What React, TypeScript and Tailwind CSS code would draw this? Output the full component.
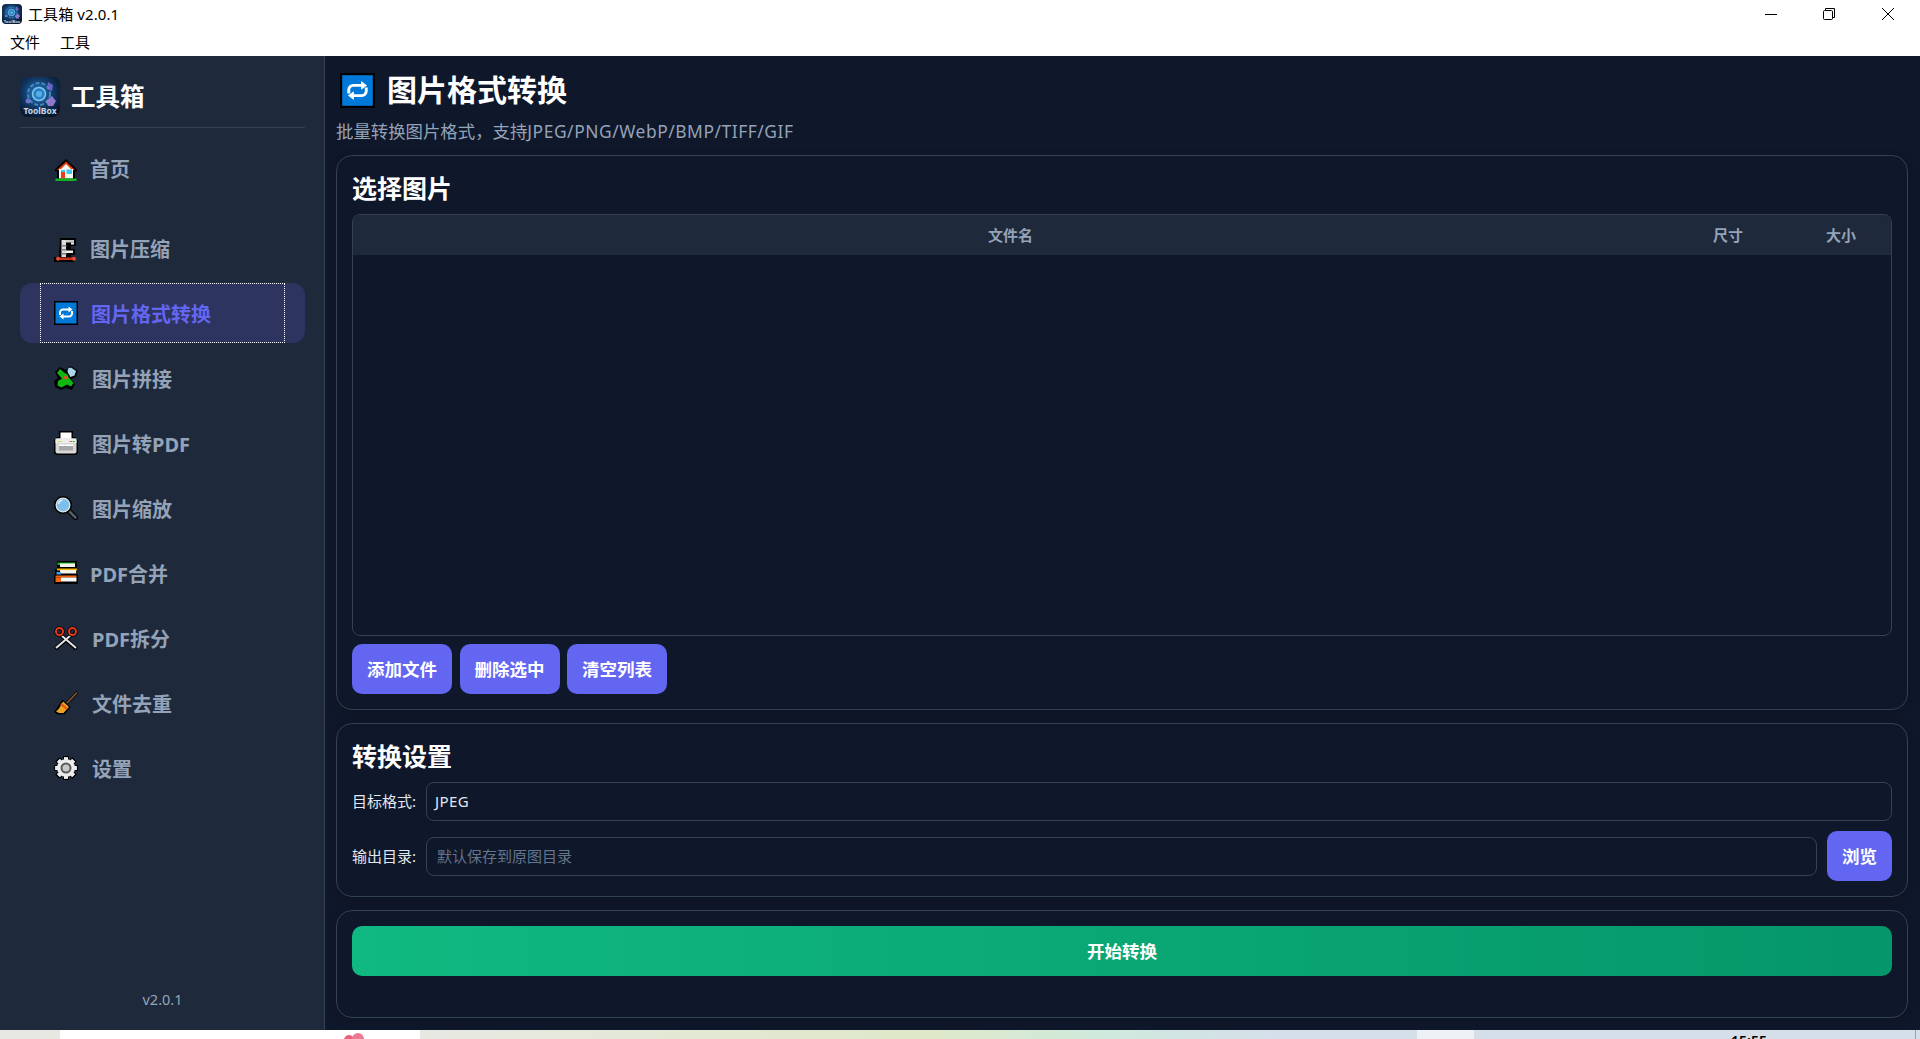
import React from "react";

const FONT = '"Noto Sans", "Noto Sans CJK SC", sans-serif';

function Logo({ id, className }: { id: string; className: string }) {
  return (
    <svg viewBox="0 0 40 40" className={className}>
      <defs>
        <radialGradient id={id} cx="0.45" cy="0.4" r="0.65">
          <stop offset="0" stopColor="#2b7fd0" />
          <stop offset="0.55" stopColor="#123a66" />
          <stop offset="1" stopColor="#08162a" />
        </radialGradient>
      </defs>
      <rect width="40" height="40" rx="8" fill={`url(#${id})`} />
      <circle cx="19" cy="17" r="11" fill="none" stroke="#4fa0d4" strokeWidth="2" strokeDasharray="4 2" opacity="0.75" />
      <circle cx="19" cy="17" r="6.5" fill="#2a7fc8" stroke="#7cc8ea" strokeWidth="1.5" />
      <circle cx="19" cy="17" r="3" fill="#58aee0" />
      <path d="M28 5l5 3-1 6-5-2z" fill="#7d6fd8" opacity="0.8" />
      <path d="M32 19l4 5-3 5h-5l-2-5z" fill="#a784e0" opacity="0.85" />
      <circle cx="8" cy="24" r="2.5" fill="#8a7be0" opacity="0.8" />
      <text x="20" y="37" textAnchor="middle" fontSize="8.5" fontWeight="700" fill="#c8d8e8" fontFamily="Noto Sans, sans-serif">ToolBox</text>
    </svg>
  );
}

function HouseIcon() {
  return (
    <svg viewBox="0 0 24 24" className="h-[24px] w-[24px]">
      <path d="M12 1L1 11.500v2h2V23h18v-9.500h2v-2z" fill="#000" />
      <path d="M12 3.500L3 12h18z" fill="#e8380f" />
      <rect x="5" y="11" width="14" height="9.500" fill="#f6f6f0" />
      <path d="M12 6L6 12h12z" fill="#f6f6f0" />
      <rect x="7" y="14" width="4" height="6.500" fill="#ee3b1a" />
      <rect x="7" y="12" width="4" height="2" fill="#3ec6f4" />
      <rect x="12.500" y="11.500" width="5.500" height="4.500" fill="#3ec6f4" />
      <rect x="1.500" y="20.500" width="21" height="2.500" fill="#13b31d" />
    </svg>
  );
}

function ClampIcon() {
  return (
    <svg viewBox="0 0 24 24" className="h-[24px] w-[24px]">
      <path d="M6 0h16v8h-5v3h4v6h-4v3h3v4H0v-5h5z" fill="#000" />
      <rect x="7.500" y="2" width="4.500" height="17" fill="#dcdcdc" />
      <rect x="12" y="2" width="8" height="2.500" fill="#c9c9c9" />
      <rect x="17" y="4.500" width="3" height="2" fill="#f2f2f2" />
      <rect x="7" y="7" width="5.500" height="1.500" fill="#7d7d7d" />
      <rect x="7" y="11" width="5.500" height="1.500" fill="#7d7d7d" />
      <rect x="7" y="15" width="5.500" height="1.500" fill="#7d7d7d" />
      <rect x="12" y="12.500" width="7" height="2.500" fill="#efefef" />
      <rect x="3" y="19.500" width="18" height="2.500" fill="#c9341b" />
      <circle cx="4" cy="20.700" r="2" fill="#e64a2a" />
      <circle cx="20" cy="20.700" r="2" fill="#e64a2a" />
    </svg>
  );
}

function RepeatIcon({ className }: { className: string }) {
  return (
    <svg viewBox="0 0 24 24" className={className}>
      <rect width="24" height="24" fill="#000" />
      <rect x="1.500" y="1.500" width="21" height="21" fill="#0078d7" />
      <path d="M6 14v-2.500a3 3 0 0 1 3-3h7" fill="none" stroke="#fff" strokeWidth="2" />
      <path d="M14.500 5.500L18.500 8.500l-4 3z" fill="#fff" />
      <path d="M18 10v2.500a3 3 0 0 1-3 3H8" fill="none" stroke="#fff" strokeWidth="2" />
      <path d="M9.500 12.500L5.500 15.500l4 3z" fill="#fff" />
    </svg>
  );
}

function PuzzleIcon() {
  return (
    <svg viewBox="0 0 24 24" className="h-[24px] w-[24px]">
      <path d="M6 1l6 3 5-4 7 5-2 6-5 2 4 5-3 6-6-2-5 2-6-3-1-6 4-3-3-6z" fill="#000" />
      <path d="M14 2.500l3-1 5 3.500-1.500 4.500-4 1.500-3-5z" fill="#a9d6ea" />
      <path d="M6 3l4 3.500 3.500 2 1 2.500 5 6-2.500 3.500-4-2-5.500 3-4-2 .5-4.500 4-2.500L3 7z" fill="#12b512" />
      <rect x="10" y="10" width="3.500" height="3" fill="#d8532a" />
    </svg>
  );
}

function PrinterIcon() {
  return (
    <svg viewBox="0 0 24 24" className="h-[24px] w-[24px]">
      <path d="M5 0h14v6h2l3 3v13l-2 2H2l-2-2V9l3-3h2z" fill="#000" />
      <rect x="6.500" y="1.500" width="11" height="8" fill="#fff" />
      <rect x="1.500" y="7.500" width="21" height="15" rx="2" fill="#d7d7d7" />
      <rect x="1.500" y="7.500" width="21" height="4.500" fill="#ececec" />
      <rect x="3.500" y="10" width="4.500" height="1" fill="#d9d94a" />
      <rect x="15.500" y="10" width="2.500" height="1" fill="#e05a4a" />
      <rect x="18.500" y="10" width="2.500" height="1" fill="#49b95a" />
      <rect x="5" y="15" width="14" height="4.500" fill="#a6a6a6" />
      <rect x="5" y="13.500" width="14" height="1.500" fill="#fff" />
    </svg>
  );
}

function SearchIcon() {
  return (
    <svg viewBox="0 0 24 24" className="h-[24px] w-[24px]">
      <path d="M14 14l7.500 7.500" stroke="#000" strokeWidth="5" strokeLinecap="round" />
      <path d="M15 15l6.500 6.500" stroke="#56606a" strokeWidth="2.500" strokeLinecap="round" />
      <circle cx="9" cy="9" r="9" fill="#000" />
      <circle cx="9" cy="9" r="7.500" fill="#dfe6ea" />
      <circle cx="9" cy="9" r="6.200" fill="#7cc0ec" />
      <path d="M4.500 8a5 5 0 0 1 4-4" fill="none" stroke="#d6efff" strokeWidth="1.500" />
    </svg>
  );
}

function BooksIcon() {
  return (
    <svg viewBox="0 0 24 24" className="h-[24px] w-[24px]">
      <path d="M3 0h20v8h-1v5h2v10H0v-9h1V8h2z" fill="#000" />
      <rect x="3.500" y="1.500" width="17.500" height="2.500" fill="#12b01f" />
      <rect x="6" y="2.500" width="15" height="3.500" fill="#f4f4ec" />
      <rect x="3" y="7.500" width="20" height="2" fill="#f5b400" />
      <rect x="6" y="9" width="16" height="3.500" fill="#f4f4ec" />
      <rect x="2.500" y="11" width="4.500" height="2.500" fill="#3ea0e8" />
      <rect x="1.500" y="14.500" width="21" height="2" fill="#f2640f" />
      <rect x="1.500" y="16.500" width="5.500" height="4.500" fill="#f2640f" />
      <rect x="7" y="16.500" width="15.500" height="4" fill="#fafafa" />
    </svg>
  );
}

function ScissorsIcon() {
  return (
    <svg viewBox="0 0 24 24" className="h-[24px] w-[24px]">
      <path d="M7 9l15.500 14M17 9L1.500 23" stroke="#000" strokeWidth="4" />
      <path d="M7.500 9.500l14.500 12.500M16.500 9.500L2 22" stroke="#e4e4e4" strokeWidth="2" />
      <circle cx="5.500" cy="5.500" r="3.500" fill="none" stroke="#000" strokeWidth="3.500" />
      <circle cx="18.500" cy="5.500" r="3.500" fill="none" stroke="#000" strokeWidth="3.500" />
      <circle cx="5.500" cy="5.500" r="3.500" fill="none" stroke="#e5391a" strokeWidth="2" />
      <circle cx="18.500" cy="5.500" r="3.500" fill="none" stroke="#e5391a" strokeWidth="2" />
    </svg>
  );
}

function BroomIcon() {
  return (
    <svg viewBox="0 0 24 24" className="h-[24px] w-[24px]">
      <path d="M23.500 1L13 12" stroke="#000" strokeWidth="3" />
      <path d="M23 1.500L13 12" stroke="#8a5a33" strokeWidth="1.700" />
      <path d="M8.500 8.500l8 7.500-6 7.500H4L0 21l3-4z" fill="#000" />
      <path d="M9 10.500l6 5.500-5.500 6H5l-3-1.500 3-3z" fill="#eda21c" />
      <path d="M7.500 12l6 5-1.300 1.700-6-5z" fill="#e2531b" />
    </svg>
  );
}

function GearIcon() {
  const teeth = [0, 45, 90, 135, 180, 225, 270, 315];
  return (
    <svg viewBox="0 0 24 24" className="h-[24px] w-[24px]">
      {teeth.map((a) => (
        <rect key={a} x="9" y="0" width="6" height="24" fill="#000" transform={`rotate(${a} 12 12)`} />
      ))}
      {teeth.map((a) => (
        <rect key={a} x="10" y="1.300" width="4" height="21.400" fill="#ececec" transform={`rotate(${a} 12 12)`} />
      ))}
      <circle cx="12" cy="12" r="9" fill="#ececec" />
      <circle cx="12" cy="12" r="5.500" fill="#5a5a5a" />
      <circle cx="12" cy="12" r="3.500" fill="#c8c8c8" />
    </svg>
  );
}

const items = [
  { icon: <PuzzleIcon />, label: "图片拼接", shift: true },
  { icon: <PrinterIcon />, label: "图片转PDF", shift: true },
  { icon: <SearchIcon />, label: "图片缩放", shift: true },
  { icon: <BooksIcon />, label: "PDF合并", shift: false },
  { icon: <ScissorsIcon />, label: "PDF拆分", shift: true },
  { icon: <BroomIcon />, label: "文件去重", shift: true },
  { icon: <GearIcon />, label: "设置", shift: true },
];

function NavItem({ icon, label, shift }: { icon: React.ReactNode; label: string; shift: boolean }) {
  return (
    <div className="flex h-[60px] items-center pl-[34px]">
      <span className="flex w-[24px] shrink-0 items-center">{icon}</span>
      <span className={`pt-[4px] text-[20px] font-bold text-[#94a3b8] ${shift ? "ml-[14px]" : "ml-[12px]"}`}>{label}</span>
    </div>
  );
}

function Button({ label, className }: { label: string; className: string }) {
  return (
    <div className={`flex h-[50px] items-center justify-center rounded-[10px] bg-[#6366f1] text-[17.5px] font-bold text-white ${className}`}>
      {label}
    </div>
  );
}

function Card({ children, className }: { children: React.ReactNode; className: string }) {
  return (
    <section className={`flex flex-col rounded-[16px] border-[1.5px] border-[#334155] bg-[#0f172a] px-[15px] shadow-[0_2px_10px_rgba(0,0,0,0.18)] ${className}`}>
      {children}
    </section>
  );
}

export default function App() {
  return (
    <div className="flex h-[1039px] w-[1920px] flex-col overflow-hidden bg-white" style={{ fontFamily: FONT }}>
      <header className="h-[56px] shrink-0 bg-white text-black">
        <div className="flex h-[28px] items-center">
          <Logo id="logo-small" className="ml-[2px] h-[20px] w-[20px]" />
          <span className="ml-[6px] text-[15px] leading-none tracking-[0.1px]">工具箱 v2.0.1</span>
          <div className="ml-auto flex items-center">
            <svg viewBox="0 0 12 12" className="mr-[46px] h-[12px] w-[12px]">
              <path d="M0 6.500h12" stroke="#000" strokeWidth="1" />
            </svg>
            <svg viewBox="0 0 12 12" className="mr-[47px] h-[12px] w-[12px]">
              <path d="M2.500 2.500v-2h9v9h-2" fill="none" stroke="#000" strokeWidth="1" />
              <rect x="0.500" y="2.500" width="9" height="9" rx="1" fill="none" stroke="#000" strokeWidth="1" />
            </svg>
            <svg viewBox="0 0 12 12" className="mr-[26px] h-[12px] w-[12px]">
              <path d="M0 0l12 12M12 0L0 12" stroke="#000" strokeWidth="1" />
            </svg>
          </div>
        </div>
        <div className="flex h-[28px] items-center gap-[20px] pl-[10px] text-[15px] leading-none">
          <span>文件</span>
          <span>工具</span>
        </div>
      </header>

      <div className="flex min-h-0 flex-1">
        <aside className="flex w-[325px] shrink-0 flex-col border-r border-[#334155] bg-[#1e293b] pb-[19px] pl-[20px] pr-[19px]">
          <div className="flex h-[72px] shrink-0 items-center border-b border-[#334155] pt-[10px]">
            <Logo id="logo-large" className="h-[40px] w-[40px]" />
            <span className="ml-[11px] pt-[2px] text-[24.5px] font-bold text-white">工具箱</span>
          </div>
          <nav className="flex flex-1 flex-col">
            <div className="mt-[12px] flex h-[60px] items-center pl-[34px]">
              <HouseIcon />
              <span className="ml-[12px] text-[20px] font-bold text-[#94a3b8]">首页</span>
            </div>
            <div className="mt-[20px] flex h-[60px] items-center pl-[34px]">
              <ClampIcon />
              <span className="ml-[12px] text-[20px] font-bold text-[#94a3b8]">图片压缩</span>
            </div>
            <div className="mt-[3px] h-[60px] rounded-[12px] bg-[#2e3460] px-[20px]">
              <div className="flex h-full items-center border border-dotted border-white pl-[13px]">
                <RepeatIcon className="h-[24px] w-[24px]" />
                <span className="ml-[13px] pt-[4px] text-[20px] font-bold text-[#6366f1]">图片格式转换</span>
              </div>
            </div>
            <div className="mt-[5px] flex flex-col gap-[5px]">
              {items.map((it) => (
                <NavItem key={it.label} {...it} />
              ))}
            </div>
            <div className="mt-auto text-center text-[14.5px] text-[#94a3b8]">v2.0.1</div>
          </nav>
        </aside>

        <main className="flex min-w-0 flex-1 flex-col bg-[#0f172a] pb-[12px] pl-[11px] pr-[12px]">
          <div className="flex h-[56px] shrink-0 items-center pl-[4px] pt-[12px]">
            <RepeatIcon className="h-[35px] w-[35px]" />
            <h1 className="ml-[12px] text-[30px] font-bold leading-none text-white">图片格式转换</h1>
          </div>
          <p className="mt-[7px] h-[24px] shrink-0 text-[17.4px] leading-[24px] text-[#94a3b8]">
            批量转换图片格式，支持<span className="tracking-[0.55px]">JPEG/PNG/WebP/BMP/TIFF/GIF</span>
          </p>

          <Card className="mt-[12px] min-h-0 flex-1 pb-[15px]">
            <h2 className="h-[58px] shrink-0 pt-[15px] text-[25px] font-bold leading-[34px] text-white">选择图片</h2>
            <div className="flex min-h-0 flex-1 flex-col overflow-hidden rounded-[8px] border border-[#334155] bg-[#0f172a]">
              <div className="grid h-[40px] shrink-0 grid-cols-[1315px_120px_1fr] items-center bg-[#1e293b] text-center text-[15px] font-semibold text-[#94a3b8]">
                <span>文件名</span>
                <span>尺寸</span>
                <span className="pl-[3px]">大小</span>
              </div>
            </div>
            <div className="mt-[8px] flex shrink-0 gap-[7.500px]">
              <Button label="添加文件" className="w-[100px]" />
              <Button label="删除选中" className="w-[100px]" />
              <Button label="清空列表" className="w-[100px]" />
            </div>
          </Card>

          <Card className="mt-[13px] h-[174px] shrink-0">
            <h2 className="h-[58px] shrink-0 pt-[12px] text-[25px] font-bold leading-[40px] text-white">转换设置</h2>
            <div className="flex h-[39px] shrink-0 items-center">
              <span className="w-[74px] shrink-0 text-[15px] text-[#e2e8f0]">目标格式:</span>
              <div className="flex h-[39px] flex-1 items-center rounded-[8px] border border-[#334155] pl-[8px] text-[15px] tracking-[0.4px] text-[#e2e8f0]">
                JPEG
              </div>
            </div>
            <div className="mt-[10px] flex h-[50px] shrink-0 items-center">
              <span className="w-[74px] shrink-0 text-[15px] text-[#e2e8f0]">输出目录:</span>
              <input
                readOnly
                placeholder="默认保存到原图目录"
                className="h-[39px] min-w-0 flex-1 rounded-[8px] border border-[#334155] bg-transparent pl-[10px] text-[15px] outline-none placeholder:text-[#64748b]"
              />
              <Button label="浏览" className="ml-[10px] w-[65px]" />
            </div>
          </Card>

          <Card className="mt-[13px] h-[108px] shrink-0 pt-[15px]">
            <div className="flex h-[50px] items-center justify-center rounded-[10px] bg-gradient-to-r from-[#10b981] to-[#059669] text-[17.5px] font-bold text-white">
              开始转换
            </div>
          </Card>
        </main>
      </div>

      <footer className="flex h-[9px] shrink-0 overflow-hidden">
        <div className="w-[60px] bg-[#e8e8e3]" />
        <div className="relative w-[360px] bg-white">
          <span className="absolute left-[284px] top-[5px] h-[10px] w-[10px] rounded-full bg-[#e8637f]" />
          <span className="absolute left-[292px] top-[3px] h-[12px] w-[12px] rounded-full bg-[#ee7a92]" />
        </div>
        <div className="w-[500px] bg-gradient-to-r from-[#e8e8e3] to-[#dfe8c8]" />
        <div className="w-[350px] bg-gradient-to-r from-[#dfe8c8] via-[#cfeadc] to-[#d4dfea]" />
        <div className="w-[147px] bg-[#d4dfea]" />
        <div className="w-[57px] bg-[#eef2f6]" />
        <div className="relative flex-1 bg-[#d4dfea]">
          <span className="absolute left-[257px] top-[4px] text-[14px] font-semibold leading-none text-black">15:55</span>
          <span className="absolute right-[4px] top-0 h-[9px] w-px bg-[#9aa3ad]" />
        </div>
      </footer>
    </div>
  );
}
